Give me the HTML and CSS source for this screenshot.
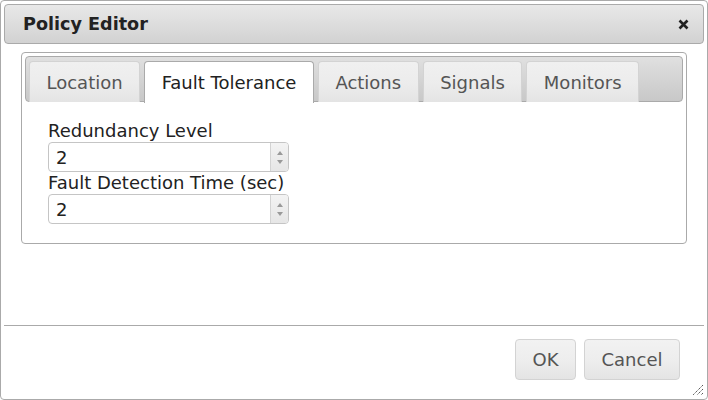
FILE: index.html
```html
<!DOCTYPE html>
<html>
<head>
<meta charset="utf-8">
<link rel="stylesheet" href="styles.css">
</head>
<body>
<div class="dialog">
  <div class="titlebar">
    <span class="title">Policy Editor</span>
    <svg class="close" width="11" height="11" viewBox="0 0 11 11">
      <path d="M1.5 1.5 L9.5 9.5 M9.5 1.5 L1.5 9.5" stroke="#222" stroke-width="2.6" stroke-linecap="butt" fill="none"/>
    </svg>
  </div>
  <div class="content">
    <div class="tabs">
      <ul class="nav">
        <li class="tab">Location</li>
        <li class="tab active">Fault Tolerance</li>
        <li class="tab">Actions</li>
        <li class="tab">Signals</li>
        <li class="tab">Monitors</li>
      </ul>
      <div class="panel">
        <label class="label">Redundancy Level</label>
        <div class="spinner">
          <span class="value">2</span>
          <span class="arrows"><span class="up"></span><span class="down"></span></span>
        </div>
        <label class="label">Fault Detection Time (sec)</label>
        <div class="spinner">
          <span class="value">2</span>
          <span class="arrows"><span class="up"></span><span class="down"></span></span>
        </div>
      </div>
    </div>
  </div>
  <div class="buttonpane">
    <button class="btn">OK</button>
    <button class="btn">Cancel</button>
  </div>
  <svg class="resize" width="12" height="12" viewBox="0 0 12 12">
    <path d="M11 1 L1 11 M11 5 L5 11 M11 9 L9 11" stroke="#555" stroke-width="1" stroke-dasharray="1.4 0.7" fill="none"/>
  </svg>
</div>
</body>
</html>
```
FILE: styles.css
```css
* { box-sizing: border-box; }
body {
  margin: 0;
  font-family: "DejaVu Sans", Verdana, sans-serif;
  background: #fff;
}
.dialog {
  position: relative;
  width: 708px;
  height: 400px;
  border: 1px solid #aaa;
  border-radius: 4px;
  padding: 3px;
  display: flex;
  flex-direction: column;
  background: #fff;
}
.titlebar {
  height: 40px;
  border: 1px solid #aaa;
  border-radius: 4px;
  background: linear-gradient(#e8e8e8, #d2d2d2);
  display: flex;
  align-items: center;
  justify-content: space-between;
  padding: 0 14px 0 18px;
}
.title {
  font-weight: bold;
  font-size: 17.6px;
  color: #222;
}
.close {
  display: block;
}
.content {
  flex: 1;
  padding: 8px 17px 0 17px;
}
.tabs {
  border: 1px solid #aaa;
  border-radius: 4px;
  padding: 3px;
  height: 192px;
}
.nav {
  list-style: none;
  margin: 0;
  height: 46px;
  padding: 4px 3px 0 3px;
  border: 1px solid #aaa;
  border-radius: 4px;
  background: linear-gradient(#e0e0e0, #c8c8c8);
  display: flex;
  gap: 4px;
}
.tab {
  height: 41px;
  border: 1px solid #d3d3d3;
  border-bottom: none;
  border-radius: 4px 4px 0 0;
  background: linear-gradient(#f0f0f0 0%, #ececec 55%, #e4e4e4 100%);
  padding: 0 16.5px;
  display: flex;
  align-items: center;
  font-size: 18px;
  color: #555;
}
.tab.active {
  height: 42px;
  background: #fff;
  border-color: #aaa;
  color: #212121;
}
.panel {
  padding: 18px 0 0 23px;
  display: flex;
  flex-direction: column;
  align-items: flex-start;
}
.label {
  font-size: 18px;
  color: #222;
  line-height: 22px;
}
.spinner {
  width: 241px;
  height: 30px;
  border: 1px solid #c5c5c5;
  border-radius: 4px;
  display: flex;
  align-items: center;
  justify-content: space-between;
}
.value {
  font-size: 18px;
  color: #222;
  padding-left: 7px;
}
.arrows {
  width: 18px;
  height: 28px;
  border-left: 1px solid #d3d3d3;
  background: linear-gradient(#f3f3f3, #e6e6e6);
  border-radius: 0 3px 3px 0;
  display: flex;
  flex-direction: column;
  align-items: center;
  justify-content: space-around;
  padding: 5px 0;
}
.up {
  width: 0; height: 0;
  border-left: 3px solid transparent;
  border-right: 3px solid transparent;
  border-bottom: 4px solid #999;
}
.down {
  width: 0; height: 0;
  border-left: 3px solid transparent;
  border-right: 3px solid transparent;
  border-top: 4px solid #999;
}
.buttonpane {
  border-top: 1px solid #aaa;
  height: 71px;
  display: flex;
  justify-content: flex-end;
  align-items: flex-start;
  gap: 8px;
  padding: 13px 24px 0 0;
}
.btn {
  height: 41px;
  border: 1px solid #d3d3d3;
  border-radius: 4px;
  background: linear-gradient(#f2f2f2 0%, #ededed 55%, #e4e4e4 100%);
  font-family: "DejaVu Sans", Verdana, sans-serif;
  font-size: 18px;
  color: #555;
  padding: 0 16.5px;
}
.resize {
  position: absolute;
  right: 3px;
  bottom: 3px;
}
```
